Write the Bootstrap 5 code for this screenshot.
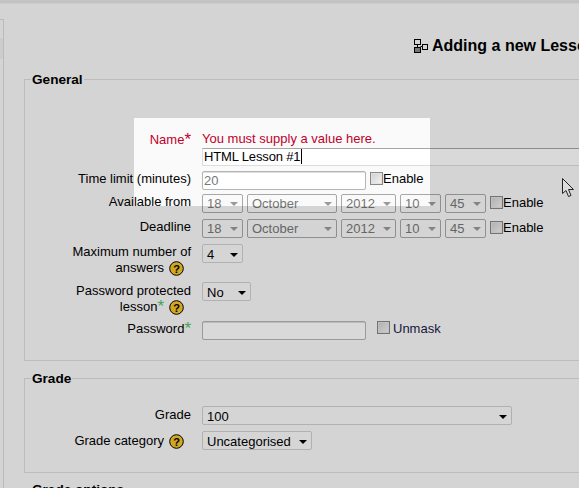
<!DOCTYPE html>
<html lang="en">
<head>
    <meta charset="UTF-8">
    <meta name="viewport" content="width=device-width, initial-scale=1">
    <title>Adding a new Lesson</title>
    <link href="https://cdn.jsdelivr.net/npm/bootstrap@5.3.0/dist/css/bootstrap.min.css" rel="stylesheet">
    <style>
        html, body { height: 488px; overflow: hidden; }
        body {
            position: relative;
            background: #fafafa;
            color: #000;
            font-family: "Liberation Sans", Arial, sans-serif;
            font-size: 13px;
            line-height: 16px;
        }
        .top-strip { height: 4px; background: #e6e6e6; border-bottom: 1px solid #f0f0f0; }
        .side-block { position: absolute; left: 0; top: 19px; width: 4px; bottom: 0; border-top: 1px solid #dcdcdc; border-right: 1px solid #dcdcdc; }
        .side-block::before { content: ""; position: absolute; left: 0; right: 0; top: 18px; height: 21px; background: #f0f0f0; }
        .page-wrap { width: 900px; padding-left: 24px; }
        .page-title { height: 75px; padding: 32px 0 0 389px; font-size: 16px; line-height: 20px; font-weight: 700; margin: 0; white-space: nowrap; }
        .page-title svg { vertical-align: -3px; margin-right: 3px; }
        .form-box { border: 1px solid #ddd; position: relative; margin: 0; padding: 0; }
        .box-title { position: absolute; left: 6px; top: -8px; padding: 0 1px; background: #fafafa; font-size: 13.6px; line-height: 16px; font-weight: 700; }
        .general-box { height: 282px; padding-top: 49px; }
        .grade-box { height: 95px; margin-top: 17px; padding-top: 27px; }
        .form-line { display: flex; }
        .form-label-cell { width: 166px; flex: none; text-align: right; }
        .form-field-cell { margin-left: 11px; flex: none; display: flex; align-items: flex-start; }
        .line-name { height: 42px; color: #c0002a; }
        .line-name .form-field-cell { display: block; width: 700px; }
        .line-name .form-label-cell { margin-top: 3px; }
        .name-input { display: block; height: 18px; width: 700px; border: 1px solid #ddd; border-top-color: #a6a6a6; background: #fff; color: #000; line-height: 16px; padding: 0 1px; margin-top: 2px; letter-spacing: -.15px; }
        .caret-bar { display: inline-block; width: 1px; height: 15px; background: #000; vertical-align: -3px; margin-left: 1px; }
        .error-text { padding-top: 3px; line-height: 14px; }
        .req-mark { color: #c0002a; font-size: 17px; line-height: 10px; vertical-align: -1px; }
        .ok-mark { color: #4fc35f; font-size: 17px; line-height: 10px; vertical-align: -1px; }
        .line-time { height: 23px; }
        .line-date { height: 25px; }
        .line-answers { height: 38px; }
        .line-protected { height: 39px; }
        .line-protected .form-label-cell { margin-top: 1px; }
        .line-grade { height: 25px; }
        .line-grade .form-label-cell { margin-top: 1px; }
        .line-cat .form-label-cell { margin-top: 2px; }
        .text-box { display: block; width: 164px; background: #fff; border: 1px solid #b5b5b5; border-radius: 2px; box-shadow: inset 0 1px 0 #ddd; height: 19px; line-height: 17px; padding: 0 1px; color: #777; }
        .drop-box { display: flex; align-items: center; justify-content: space-between; height: 19px; background: #fbfbfb; border: 1px solid #d0d0d0; border-radius: 2px; padding: 2px 4px 0; color: #000; margin-right: 4px; }
        .drop-box::after { content: ""; border-left: 4px solid transparent; border-right: 4px solid transparent; border-top: 4px solid #000; margin-top: 1px; }
        .drop-off { border-color: #a8a8a8; color: #777; background: #fafafa; padding-top: 0; }
        .drop-off::after { border-top-color: #9a9a9a; }
        .w-two { width: 41px; }
        .w-month { width: 90px; }
        .w-year { width: 55px; }
        .w-no { width: 49px; }
        .w-grade { width: 310px; }
        .w-cat { width: 110px; }
        .tick-box { display: block; width: 13px; height: 13px; flex: none; border: 1px solid #888; background: linear-gradient(135deg, #cfcfcf, #f4f4f4); box-shadow: inset 0 0 0 1px #e2e2e2; }
        .tick-time { margin: 1px 0 0 4px; }
        .tick-date { margin: 2px 0 0 0; }
        .tick-pass { margin-left: 11px; }
        .enable-date { margin-top: 1px; }
        .help-dot { display: inline-block; vertical-align: -4px; margin: 0 7px 0 5px; }
        .unmask-text { color: #1a1a4a; margin-left: 3px; }
        .dim-layer { position: absolute; left: 134px; top: 118px; width: 296px; height: 88px; box-shadow: 0 0 0 1000px rgba(0, 0, 0, .15); }
        .mouse-arrow { position: absolute; left: 562px; top: 178px; }
        .next-title { position: absolute; left: 32px; top: 482px; font-size: 13.6px; line-height: 16px; font-weight: 700; }
    </style>
</head>
<body>
<div class="top-strip"></div>
<div class="side-block"></div>
<div class="page-wrap">
    <h2 class="page-title">
        <svg width="16" height="16" viewBox="0 0 16 16" fill="none" stroke="#000"><rect x="1.5" y="1.5" width="6" height="5"/><rect x="9.5" y="6.5" width="5" height="5"/><rect x="1.5" y="9.5" width="6" height="5" fill="#8a8a8a"/><path d="M4.5 6.5v3M7.5 8.5h2"/></svg>Adding a new Lesson
    </h2>
    <div class="form-box general-box">
        <div class="box-title">General</div>
        <div class="form-line line-name">
            <div class="form-label-cell">Name<span class="req-mark">*</span></div>
            <div class="form-field-cell">
                <div class="error-text">You must supply a value here.</div>
                <div class="name-input">HTML Lesson #1<span class="caret-bar"></span></div>
            </div>
        </div>
        <div class="form-line line-time">
            <div class="form-label-cell">Time limit (minutes)</div>
            <div class="form-field-cell">
                <span class="text-box">20</span>
                <span class="tick-box tick-time"></span><span>Enable</span>
            </div>
        </div>
        <div class="form-line line-date">
            <div class="form-label-cell">Available from</div>
            <div class="form-field-cell">
                <span class="drop-box drop-off w-two">18</span><span class="drop-box drop-off w-month">October</span><span class="drop-box drop-off w-year">2012</span><span class="drop-box drop-off w-two">10</span><span class="drop-box drop-off w-two">45</span>
                <span class="tick-box tick-date"></span><span class="enable-date">Enable</span>
            </div>
        </div>
        <div class="form-line line-date">
            <div class="form-label-cell">Deadline</div>
            <div class="form-field-cell">
                <span class="drop-box drop-off w-two">18</span><span class="drop-box drop-off w-month">October</span><span class="drop-box drop-off w-year">2012</span><span class="drop-box drop-off w-two">10</span><span class="drop-box drop-off w-two">45</span>
                <span class="tick-box tick-date"></span><span class="enable-date">Enable</span>
            </div>
        </div>
        <div class="form-line line-answers">
            <div class="form-label-cell">Maximum number of<br>answers<svg class="help-dot" width="15" height="15" viewBox="0 0 15 15"><circle cx="7.5" cy="7.5" r="6.8" fill="#f5c428" stroke="#000"/><text x="7.5" y="11.5" text-anchor="middle" font-family="Liberation Sans" font-size="11" font-weight="700">?</text></svg></div>
            <div class="form-field-cell"><span class="drop-box w-two">4</span></div>
        </div>
        <div class="form-line line-protected">
            <div class="form-label-cell">Password protected<br>lesson<span class="ok-mark">*</span><svg class="help-dot" width="15" height="15" viewBox="0 0 15 15"><circle cx="7.5" cy="7.5" r="6.8" fill="#f5c428" stroke="#000"/><text x="7.5" y="11.5" text-anchor="middle" font-family="Liberation Sans" font-size="11" font-weight="700">?</text></svg></div>
            <div class="form-field-cell"><span class="drop-box w-no">No</span></div>
        </div>
        <div class="form-line">
            <div class="form-label-cell">Password<span class="ok-mark">*</span></div>
            <div class="form-field-cell">
                <span class="text-box"></span>
                <span class="tick-box tick-pass"></span><span class="unmask-text">Unmask</span>
            </div>
        </div>
    </div>
    <div class="form-box grade-box">
        <div class="box-title">Grade</div>
        <div class="form-line line-grade">
            <div class="form-label-cell">Grade</div>
            <div class="form-field-cell"><span class="drop-box w-grade">100</span></div>
        </div>
        <div class="form-line line-cat">
            <div class="form-label-cell">Grade category<svg class="help-dot" width="15" height="15" viewBox="0 0 15 15"><circle cx="7.5" cy="7.5" r="6.8" fill="#f5c428" stroke="#000"/><text x="7.5" y="11.5" text-anchor="middle" font-family="Liberation Sans" font-size="11" font-weight="700">?</text></svg></div>
            <div class="form-field-cell"><span class="drop-box w-cat">Uncategorised</span></div>
        </div>
    </div>
</div>
<div class="next-title">Grade options</div>
<div class="dim-layer"></div>
<svg class="mouse-arrow" width="13" height="20" viewBox="0 0 13 20"><path d="M.5.5v15l3.5-3 2.5 6 2.5-1-2.5-6h5z" fill="#ddd" stroke="#222"/></svg>
<script src="https://cdn.jsdelivr.net/npm/bootstrap@5.3.0/dist/js/bootstrap.bundle.min.js"></script>
</body>
</html>
